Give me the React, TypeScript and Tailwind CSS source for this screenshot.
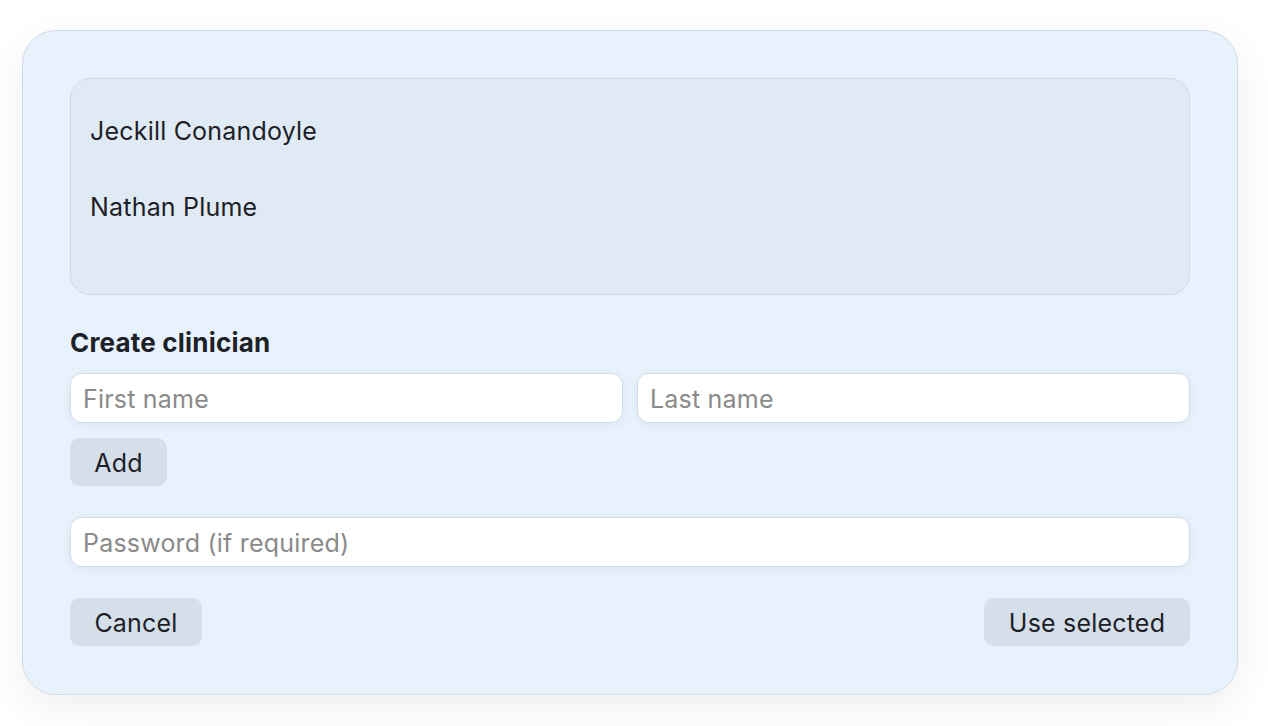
import React from "react";

const clinicians = ["Jeckill Conandoyle", "Nathan Plume"];

const inputCls =
  "h-[50px] rounded-[12px] border border-[#d3dde8] bg-white px-[12px] pt-[2px] text-[25px] tracking-[0.2px] placeholder-[#8a8a8a] outline-none shadow-[0_2px_8px_rgba(120,150,190,0.12)]";

const btnCls = "h-[48px] rounded-[10px] bg-[#d5dfe9] pt-[3px] text-[25px] tracking-[0.2px]";

export default function App() {
  return (
    <div
      className="w-[1268px] h-[726px] bg-white pt-[30px] pl-[22px]"
      style={{ fontFamily: "Inter, 'Noto Sans', sans-serif" }}
    >
      <div className="w-[1216px] h-[665px] rounded-[34px] border border-[#d3dbe5] bg-[#e8f2fc] p-[47px] shadow-[0_12px_40px_rgba(0,0,0,0.07)] text-[#1d2127]">
        <div className="h-[217px] rounded-[20px] border border-[#d0dae4] bg-[#e0eaf4] pt-[15px]">
          {clinicians.map((name) => (
            <div
              key={name}
              className="h-[76px] flex items-center px-[19px] text-[25px] tracking-[0.2px]"
            >
              {name}
            </div>
          ))}
        </div>

        <div className="mt-[33px] text-[26px] font-bold leading-[30px] tracking-[0.2px]">
          Create clinician
        </div>

        <div className="mt-[15px] flex gap-[14px]">
          <input placeholder="First name" className={`flex-1 ${inputCls}`} />
          <input placeholder="Last name" className={`flex-1 ${inputCls}`} />
        </div>

        <button className={`mt-[15px] w-[97px] ${btnCls}`}>Add</button>

        <input
          placeholder="Password (if required)"
          className={`mt-[31px] block w-full ${inputCls}`}
        />

        <div className="mt-[31px] flex justify-between">
          <button className={`w-[132px] ${btnCls}`}>Cancel</button>
          <button className={`w-[206px] ${btnCls}`}>Use selected</button>
        </div>
      </div>
    </div>
  );
}
